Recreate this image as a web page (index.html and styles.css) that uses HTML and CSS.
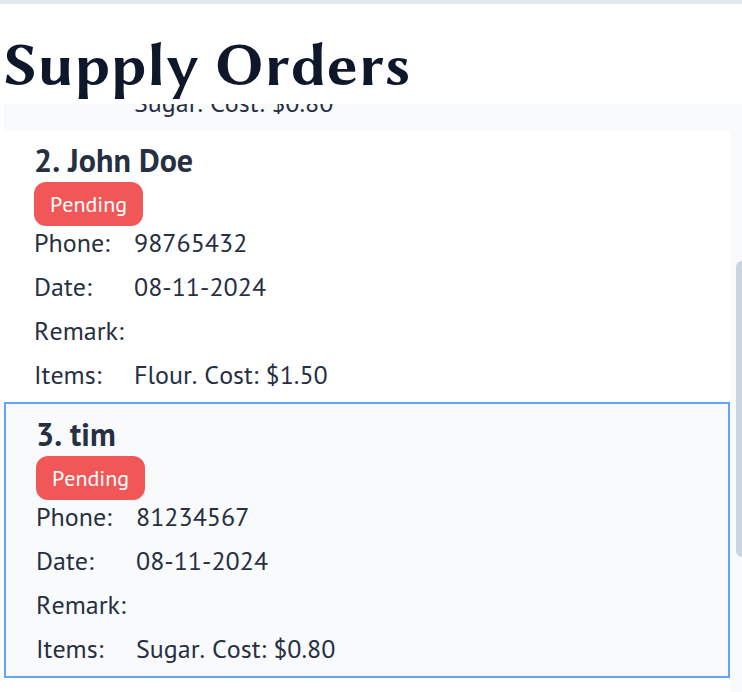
FILE: index.html
```html
<!DOCTYPE html>
<html lang="en">
<head>
<meta charset="utf-8">
<meta name="viewport" content="width=device-width, initial-scale=1">
<title>Supply Orders</title>
<link rel="stylesheet" href="styles.css">
</head>
<body>
<main class="panel">
  <h1 class="title">Supply Orders</h1>
  <div class="viewport">
    <div class="list">
      <section class="order order-scrolled">
        <dl class="details">
          <div class="row"><dt></dt><dd>Sugar. Cost: $0.80</dd></div>
        </dl>
      </section>
      <section class="order">
        <h2 class="name">2. John Doe</h2>
        <span class="badge">Pending</span>
        <dl class="details">
          <div class="row"><dt>Phone:</dt><dd>98765432</dd></div>
          <div class="row"><dt>Date:</dt><dd>08-11-2024</dd></div>
          <div class="row"><dt>Remark:</dt><dd></dd></div>
          <div class="row"><dt>Items:</dt><dd>Flour. Cost: $1.50</dd></div>
        </dl>
      </section>
      <section class="order order-selected">
        <h2 class="name">3. tim</h2>
        <span class="badge">Pending</span>
        <dl class="details">
          <div class="row"><dt>Phone:</dt><dd>81234567</dd></div>
          <div class="row"><dt>Date:</dt><dd>08-11-2024</dd></div>
          <div class="row"><dt>Remark:</dt><dd></dd></div>
          <div class="row"><dt>Items:</dt><dd>Sugar. Cost: $0.80</dd></div>
        </dl>
      </section>
    </div>
    <div class="track"><div class="thumb"></div></div>
  </div>
</main>
</body>
</html>
```
FILE: styles.css
```css
* {
  box-sizing: border-box;
}

body {
  margin: 0;
  background: #fff;
  color: #272f42;
  font-family: "PT Sans", "Noto Sans", sans-serif;
  font-size: 26px;
  line-height: 34px;
  font-kerning: none;
}

.panel {
  display: flex;
  flex-direction: column;
  height: 100vh;
  padding-left: 4px;
  border-top: 4px solid #e2e8f0;
  overflow: hidden;
}

.title {
  margin: 0;
  padding: 22px 0 0;
  color: #0f172a;
  font-family: "Linux Biolinum", "Linux Biolinum O", "Libertinus Sans", Lato, sans-serif;
  font-size: 62px;
  font-weight: 700;
  line-height: 78px;
}

.viewport {
  display: flex;
  flex: 1;
  min-height: 0;
  overflow: hidden;
}

.list {
  flex: 1;
  margin-top: -18px;
}

.order {
  padding: 12px 30px 0;
  background: #fff;
}

.order-scrolled {
  padding-top: 0;
  background: #f8fafc;
}

.order-selected {
  border: 2px solid #60a5fa;
  background: #f8fafc;
}

.name {
  margin: 0;
  padding-bottom: 4px;
  font-size: 32px;
  font-weight: 700;
  line-height: 36px;
}

.badge {
  display: block;
  width: fit-content;
  padding: 0 16px;
  border-radius: 12px;
  background: #f25757;
  color: #fff;
  font-size: 22px;
  line-height: 44px;
}

.details {
  margin: 0;
}

.row {
  display: grid;
  grid-template-columns: 100px 1fr;
  padding-bottom: 10px;
  min-height: 44px;
}

.row dd {
  margin: 0;
}

.track {
  width: 12px;
  padding-left: 6px;
  background: #f8fafc;
}

.thumb {
  position: relative;
  top: 26.7%;
  width: 12px;
  height: 50.3%;
  border-radius: 6px;
  background: #cbd5e1;
}
```
